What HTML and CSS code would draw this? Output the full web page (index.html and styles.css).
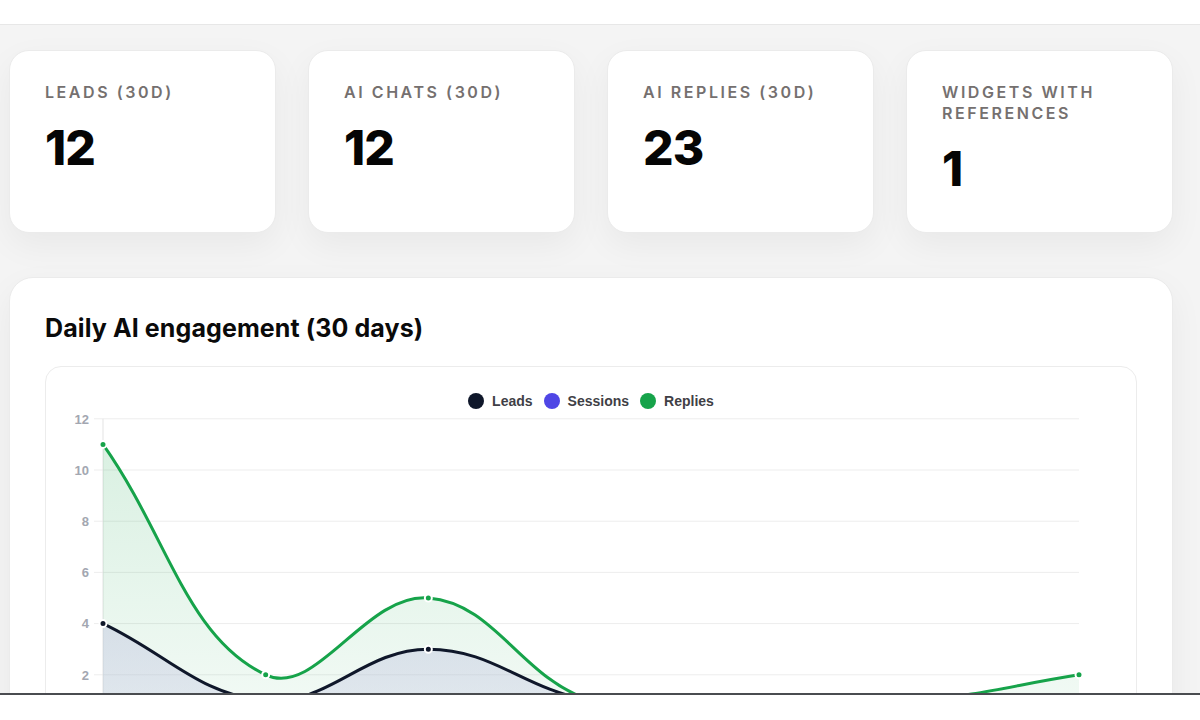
FILE: index.html
```html
<!DOCTYPE html>
<html lang="en">
<head>
<meta charset="utf-8">
<title>Dashboard</title>
<link rel="stylesheet" href="styles.css">
</head>
<body>
<header class="topbar"></header>
<main class="main">
  <section class="stats">
    <div class="stat-card">
      <div class="stat-label">Leads (30d)</div>
      <div class="stat-value">12</div>
    </div>
    <div class="stat-card">
      <div class="stat-label">AI chats (30d)</div>
      <div class="stat-value">12</div>
    </div>
    <div class="stat-card">
      <div class="stat-label">AI replies (30d)</div>
      <div class="stat-value">23</div>
    </div>
    <div class="stat-card">
      <div class="stat-label">Widgets with references</div>
      <div class="stat-value">1</div>
    </div>
  </section>

  <section class="chart-card">
    <h2 class="chart-title">Daily AI engagement (30 days)</h2>
    <div class="chart-box">
      <div class="legend">
        <span class="legend-item"><span class="dot dot-leads"></span>Leads</span>
        <span class="legend-item"><span class="dot dot-sessions"></span>Sessions</span>
        <span class="legend-item"><span class="dot dot-replies"></span>Replies</span>
      </div>
      <svg class="chart-svg" width="1090" height="360" viewBox="46 410 1090 360" xmlns="http://www.w3.org/2000/svg">
        <defs>
          <linearGradient id="gReplies" x1="0" y1="418.8" x2="0" y2="726" gradientUnits="userSpaceOnUse">
            <stop offset="0" stop-color="#16a34a" stop-opacity="0.17"/>
            <stop offset="1" stop-color="#16a34a" stop-opacity="0.05"/>
          </linearGradient>
          <linearGradient id="gLeads" x1="0" y1="600" x2="0" y2="726" gradientUnits="userSpaceOnUse">
            <stop offset="0" stop-color="#bec2df" stop-opacity="0.48"/>
            <stop offset="1" stop-color="#bec2df" stop-opacity="0.3"/>
          </linearGradient>
        </defs>
        <g class="grid">
          <line x1="94" y1="418.8" x2="1079" y2="418.8"/>
          <line x1="94" y1="470" x2="1079" y2="470"/>
          <line x1="94" y1="521.2" x2="1079" y2="521.2"/>
          <line x1="94" y1="572.4" x2="1079" y2="572.4"/>
          <line x1="94" y1="623.6" x2="1079" y2="623.6"/>
          <line x1="94" y1="674.8" x2="1079" y2="674.8"/>
          <line x1="94" y1="726" x2="1079" y2="726"/>
        </g>
        <line class="axis" x1="103" y1="418.8" x2="103" y2="735"/>
        <g class="ylabels">
          <text x="89" y="423.5">12</text>
          <text x="89" y="474.7">10</text>
          <text x="89" y="525.9">8</text>
          <text x="89" y="577.1">6</text>
          <text x="89" y="628.3">4</text>
          <text x="89" y="679.5">2</text>
        </g>
        <path fill="url(#gReplies)" d="M103,444.4 C168.07,536.56 186.22,637.29 265.67,674.8 C316.36,698.73 365.41,593.05 428.33,598 C495.54,603.29 520.53,678.22 591,700.4 C650.67,719.18 688.6,700.4 753.67,700.4 C818.74,700.4 851.65,705.49 916.33,700.4 C981.79,695.25 1013.93,685.04 1079,674.8 L1079,726 L103,726 Z"/>
        <path fill="url(#gLeads)" d="M103,623.6 C168.07,654.32 198.85,695.14 265.67,700.4 C328.98,705.38 363.26,649.2 428.33,649.2 C493.4,649.2 524.4,689.92 591,700.4 C654.54,710.4 688.6,700.4 753.67,700.4 C818.74,700.4 851.26,700.4 916.33,700.4 C981.4,700.4 1013.93,700.4 1079,700.4 L1079,726 L103,726 Z"/>
        <path class="line line-replies" d="M103,444.4 C168.07,536.56 186.22,637.29 265.67,674.8 C316.36,698.73 365.41,593.05 428.33,598 C495.54,603.29 520.53,678.22 591,700.4 C650.67,719.18 688.6,700.4 753.67,700.4 C818.74,700.4 851.65,705.49 916.33,700.4 C981.79,695.25 1013.93,685.04 1079,674.8"/>
        <path class="line line-leads" d="M103,623.6 C168.07,654.32 198.85,695.14 265.67,700.4 C328.98,705.38 363.26,649.2 428.33,649.2 C493.4,649.2 524.4,689.92 591,700.4 C654.54,710.4 688.6,700.4 753.67,700.4 C818.74,700.4 851.26,700.4 916.33,700.4 C981.4,700.4 1013.93,700.4 1079,700.4"/>
        <g class="pts pts-replies">
          <circle cx="103" cy="444.4" r="3.5"/>
          <circle cx="265.67" cy="674.8" r="3.5"/>
          <circle cx="428.33" cy="598" r="3.5"/>
          <circle cx="591" cy="700.4" r="3.5"/>
          <circle cx="753.67" cy="700.4" r="3.5"/>
          <circle cx="916.33" cy="700.4" r="3.5"/>
          <circle cx="1079" cy="674.8" r="3.5"/>
        </g>
        <g class="pts pts-leads">
          <circle cx="103" cy="623.6" r="3.5"/>
          <circle cx="265.67" cy="700.4" r="3.5"/>
          <circle cx="428.33" cy="649.2" r="3.5"/>
          <circle cx="591" cy="700.4" r="3.5"/>
          <circle cx="753.67" cy="700.4" r="3.5"/>
          <circle cx="916.33" cy="700.4" r="3.5"/>
          <circle cx="1079" cy="700.4" r="3.5"/>
        </g>
      </svg>
    </div>
  </section>
</main>
<footer class="bottom-edge"></footer>
</body>
</html>
```

FILE: styles.css
```css
* { box-sizing: border-box; }

html, body {
  margin: 0;
  padding: 0;
  width: 1200px;
  height: 720px;
  overflow: hidden;
  background: #ffffff;
  font-family: Inter, "Noto Sans", "Liberation Sans", sans-serif;
  color: #0a0a0a;
}

.topbar {
  height: 25px;
  background: #ffffff;
  border-bottom: 1px solid #e7e7e7;
}

.main {
  height: 668px;
  overflow: hidden;
  background: #f4f4f4;
  padding: 25px 27px 0 9px;
}

.stats {
  display: grid;
  grid-template-columns: repeat(4, 267px);
  column-gap: 32px;
}

.stat-card {
  background: #ffffff;
  border: 1px solid #ebebeb;
  border-radius: 20px;
  padding: 31px 35px 34px;
  box-shadow: 0 12px 34px rgba(0, 0, 0, 0.05);
  min-height: 183px;
}

.stat-label {
  font-size: 16px;
  line-height: 21px;
  font-weight: 600;
  text-transform: uppercase;
  letter-spacing: 0.16em;
  color: #75706f;
}

.stat-value {
  margin-top: 16px;
  font-size: 48px;
  line-height: 58px;
  font-weight: 800;
  letter-spacing: -0.02em;
  color: #050505;
}

.chart-card {
  margin-top: 44px;
  background: #ffffff;
  border: 1px solid #ebebeb;
  border-radius: 24px;
  padding: 35px 35px 40px;
  box-shadow: 0 12px 34px rgba(0, 0, 0, 0.05);
  min-height: 600px;
}

.chart-title {
  margin: 0 0 23px;
  font-size: 25px;
  line-height: 30px;
  font-weight: 700;
  letter-spacing: 0.004em;
  color: #0a0a0a;
}

.chart-box {
  border: 1px solid #ececec;
  border-radius: 16px;
  background: #ffffff;
  overflow: hidden;
}

.legend {
  display: flex;
  justify-content: center;
  align-items: center;
  gap: 11px;
  padding-top: 24px;
  height: 43px;
  padding-bottom: 0;
  font-family: "Liberation Sans", Arial, sans-serif;
  font-size: 14px;
  font-weight: 700;
  color: #3f3f46;
  line-height: 16px;
}

.legend-item {
  display: flex;
  align-items: center;
  gap: 8px;
}

.dot {
  width: 16px;
  height: 16px;
  border-radius: 50%;
  display: inline-block;
}
.dot-leads { background: #0f172a; }
.dot-sessions { background: #4f46e5; }
.dot-replies { background: #16a34a; }

.chart-svg {
  display: block;
}

.grid line {
  stroke: #ededed;
  stroke-width: 1;
}

.axis {
  stroke: #e3e3e3;
  stroke-width: 1;
}

.ylabels text {
  font-family: "Liberation Sans", Arial, sans-serif;
  font-size: 13px;
  font-weight: 700;
  fill: #a3a7b1;
  text-anchor: end;
}

.line {
  fill: none;
  stroke-width: 3;
  stroke-linecap: round;
  stroke-linejoin: round;
}
.line-replies { stroke: #16a34a; }
.line-leads { stroke: #0f172a; }

.pts circle {
  stroke: #ffffff;
  stroke-width: 2;
}
.pts-replies circle { fill: #16a34a; }
.pts-leads circle { fill: #0f172a; }

.bottom-edge {
  height: 27px;
  background: #ffffff;
  border-top: 2px solid #4a4c50;
}
```
